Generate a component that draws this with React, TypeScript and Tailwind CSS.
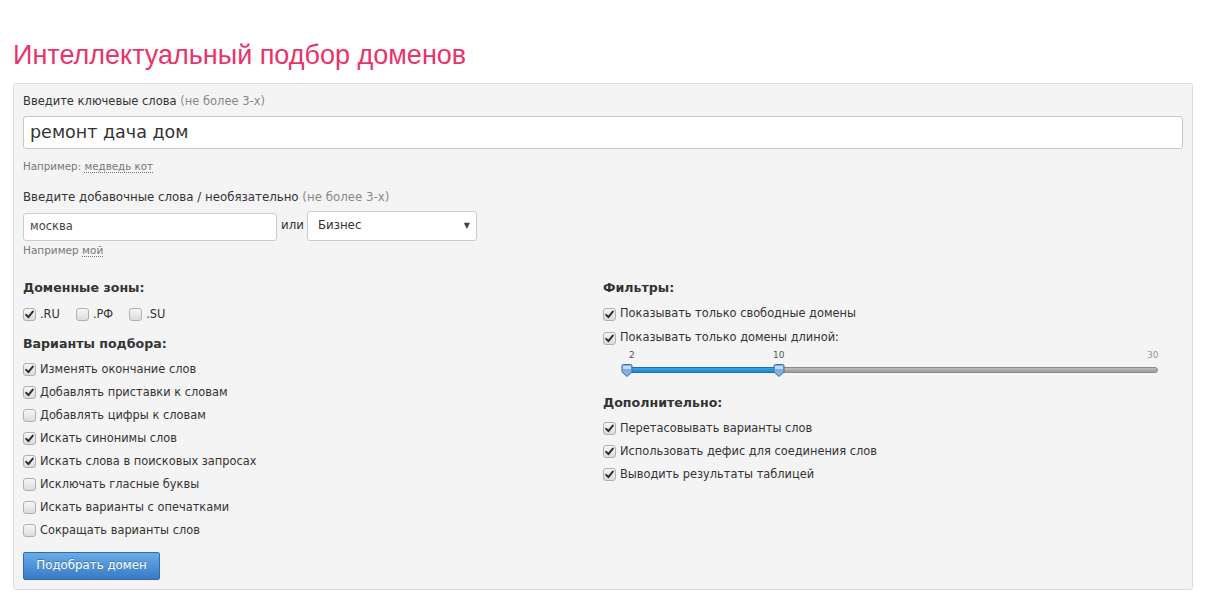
import React from "react";

const font = { fontFamily: '"DejaVu Sans", Verdana, sans-serif' };

function Box({ checked }: { checked?: boolean }) {
  return (
    <span className="inline-flex w-[13px] h-[13px] shrink-0 items-center justify-center rounded-[3px] border border-[#b0b0b0] bg-gradient-to-b from-[#f6f6f6] to-[#dcdcdc]">
      {checked && (
        <svg width="9" height="9" viewBox="0 0 9 9">
          <path d="M1.2 4.8 L3.4 7.2 L7.8 1.6" fill="none" stroke="#2b2b2b" strokeWidth="1.9" strokeLinecap="round" strokeLinejoin="round" />
        </svg>
      )}
    </span>
  );
}

function Check({ label, checked }: { label: string; checked?: boolean }) {
  return (
    <label className="flex items-center gap-[4px] h-[23px] text-[11.4px] text-[#333]">
      <Box checked={checked} />
      <span>{label}</span>
    </label>
  );
}

function Handle({ left }: { left: number }) {
  return (
    <svg
      className="absolute top-[2px]"
      style={{ left: left - 6 }}
      width="12"
      height="13"
      viewBox="0 0 12 13"
    >
      <path d="M1 2 Q1 0.5 2.5 0.5 L9.5 0.5 Q11 0.5 11 2 L11 8 L6 12.5 L1 8 Z" fill="#7fb0e6" stroke="#3b6fae" strokeWidth="1" />
      <path d="M2 2 L10 2 L10 5 L2 5 Z" fill="#c6dcf4" />
    </svg>
  );
}

function Slider() {
  return (
    <div className="ml-[24px] w-[531px]">
      <div className="relative h-[10px] text-[9px] leading-[10px] text-[#555]">
        <span className="absolute left-[2px]">2</span>
        <span className="absolute left-[146px]">10</span>
        <span className="absolute left-[520px] text-[#999]">30</span>
      </div>
      <div className="relative h-[16px] mt-[2px]">
        <div className="absolute left-0 right-0 top-[5px] h-[6px] rounded-[3px] border border-[#8a8a8a] bg-gradient-to-b from-[#bdbdbd] to-[#9a9a9a]" />
        <div className="absolute left-0 w-[152px] top-[5px] h-[6px] border border-[#1b6fae] bg-gradient-to-b from-[#3fa6e8] to-[#1d85cc]" />
        <Handle left={0} />
        <Handle left={152} />
      </div>
    </div>
  );
}

export default function App() {
  return (
    <div className="min-h-screen bg-white px-[13px] pr-[23px]" style={font}>
      <h1
        className="pt-[38px] text-[27px] leading-[34px] text-[#e8336b]"
        style={{ fontFamily: '"Liberation Sans", Arial, sans-serif' }}
      >
        Интеллектуальный подбор доменов
      </h1>
      <div className="mt-[11px] rounded-[3px] border border-[#dcdcdc] bg-[#f4f4f4] px-[9px] pt-[8px] pb-[9px]">
        <div className="text-[11.5px] leading-[18px] text-[#333]">
          Введите ключевые слова <span className="text-[#888]">(не более 3-х)</span>
        </div>
        <div className="mt-[6px] h-[33px] rounded-[3px] border border-[#c8c8c8] bg-white px-[6px] flex items-center text-[17.5px] text-[#333]">
          ремонт дача дом
        </div>
        <div className="mt-[8px] text-[10.3px] leading-[18px] text-[#777]">
          Например: <span className="border-b border-dotted border-[#777]">медведь кот</span>
        </div>
        <div className="mt-[13px] text-[11.8px] leading-[18px] text-[#333]">
          Введите добавочные слова / необязательно <span className="text-[#888]">(не более 3-х)</span>
        </div>
        <div className="mt-[5px] flex items-center h-[30px]">
          <div className="w-[254px] h-[28px] mt-[2px] rounded-[3px] border border-[#cccccc] bg-white px-[6px] flex items-center text-[11.5px] text-[#444]">
            москва
          </div>
          <span className="ml-[4px] mr-[3px] text-[11.8px] text-[#333]">или</span>
          <div className="w-[170px] h-[30px] rounded-[3px] border border-[#cccccc] bg-white pl-[10px] pr-[6px] flex items-center justify-between text-[11.8px] text-[#333]">
            <span>Бизнес</span>
            <span className="text-[8px] text-[#444]">▼</span>
          </div>
        </div>
        <div className="text-[10.5px] leading-[18px] text-[#777]">
          Например <span className="border-b border-dotted border-[#777]">мой</span>
        </div>

        <div className="mt-[19px] grid grid-cols-2">
          <div>
            <div className="text-[12.6px] leading-[20px] font-bold text-[#333]">Доменные зоны:</div>
            <div className="mt-[7px] flex items-center h-[20px] text-[11.4px] text-[#333]">
              <span className="flex items-center gap-[4px]"><Box checked /> .RU</span>
              <span className="ml-[16px] flex items-center gap-[4px]"><Box /> .РФ</span>
              <span className="ml-[16px] flex items-center gap-[4px]"><Box /> .SU</span>
            </div>
            <div className="mt-[9px] mb-[4px] text-[12.6px] leading-[20px] font-bold text-[#333]">Варианты подбора:</div>
            <Check checked label="Изменять окончание слов" />
            <Check checked label="Добавлять приставки к словам" />
            <Check label="Добавлять цифры к словам" />
            <Check checked label="Искать синонимы слов" />
            <Check checked label="Искать слова в поисковых запросах" />
            <Check label="Исключать гласные буквы" />
            <Check label="Искать варианты с опечатками" />
            <Check label="Сокращать варианты слов" />
            <button className="mt-[10px] h-[28px] w-[137px] rounded-[2px] border border-[#2f6cb3] bg-gradient-to-b from-[#68ade6] to-[#3879c6] text-[11.8px] text-white [text-shadow:0_-1px_0_rgba(0,0,0,0.25)]">
              Подобрать домен
            </button>
          </div>
          <div>
            <div className="text-[12.6px] leading-[20px] font-bold text-[#333]">Фильтры:</div>
            <div className="mt-[4px]">
              <div className="h-[24px] flex items-center gap-[4px] text-[11.4px] text-[#333]"><Box checked />Показывать только свободные домены</div>
              <div className="h-[24px] flex items-center gap-[4px] text-[11.4px] text-[#333]"><Box checked />Показывать только домены длиной:</div>
            </div>
            <Slider />
            <div className="mt-[15px] mb-[4px] text-[12.6px] leading-[20px] font-bold text-[#333]">Дополнительно:</div>
            <Check checked label="Перетасовывать варианты слов" />
            <Check checked label="Использовать дефис для соединения слов" />
            <Check checked label="Выводить результаты таблицей" />
          </div>
        </div>
      </div>
    </div>
  );
}
